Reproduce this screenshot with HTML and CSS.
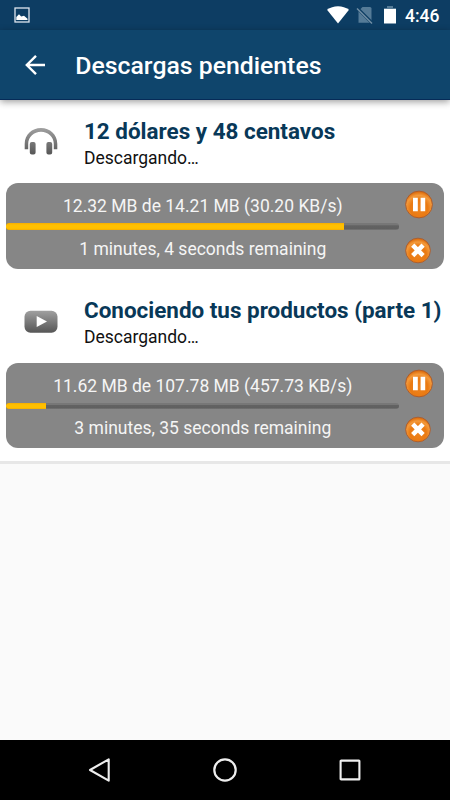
FILE: index.html
```html
<!DOCTYPE html>
<html lang="es">
<head>
<meta charset="utf-8">
<title>Descargas pendientes</title>
<link rel="stylesheet" href="styles.css">
</head>
<body>
<svg class="defs" width="0" height="0" aria-hidden="true">
  <defs>
    <linearGradient id="grey" x1="0" y1="0" x2="0" y2="1"><stop offset="0" stop-color="#a0a0a0"/><stop offset="1" stop-color="#565656"/></linearGradient>
    <radialGradient id="orange" cx=".5" cy=".65" r=".6"><stop offset="0" stop-color="#ee8420"/><stop offset=".55" stop-color="#ea7a12"/><stop offset=".82" stop-color="#f39a3c"/><stop offset="1" stop-color="#e27412"/></radialGradient>
    <symbol id="pause" viewBox="0 0 28 28"><circle cx="14" cy="14" r="13.4" fill="url(#orange)" stroke="#a6582c" stroke-width=".9"/><path d="M8 7.2h4.8v13.6H8zM15.6 7.2h4.6v13.6h-4.6z" fill="#fff"/></symbol>
    <symbol id="cancel" viewBox="0 0 28 28"><circle cx="14" cy="14" r="13.3" fill="url(#orange)" stroke="#a6582c" stroke-width=".9"/><path d="M8.3 8.3l11.2 11.2M19.5 8.3L8.3 19.5" stroke="#fff" stroke-width="4.9"/></symbol>
  </defs>
</svg>
<header class="statusbar">
  <svg class="picture" width="16" height="16" viewBox="0 0 16 16"><rect x="1" y="1" width="14" height="14" fill="none" stroke="#dfe5ee" stroke-width="1.3"/><path d="M2.3 12.9V10L5 7.2 7.2 9.5 10 8.7l3.5 3v1.2z" fill="#fff"/></svg>
  <svg class="wifi" width="24" height="20" viewBox="0 0 24 20"><path d="M1 4.8C7-.1 17-.1 23 4.8L12 18.4z" fill="#fff"/></svg>
  <svg class="sim" width="18" height="20" viewBox="0 0 18 20"><path d="M6.5 2H14q1.5 0 1.5 1.5v14.2H2.5V6z" fill="#557b97"/><path d="M1 2.8l15.5 15.5" stroke="#0d3e64" stroke-width="3.2"/><path d="M1 3.4l15 15.2" stroke="#7390a6" stroke-width="1.4"/></svg>
  <svg class="battery" width="14" height="20" viewBox="0 0 14 20"><path d="M4 1h6v2h3v3H1V3h3z" fill="#557b97"/><path d="M1 4h12v14.5H1z" fill="#fff"/></svg>
  <time class="clock">4:46</time>
</header>
<nav class="appbar">
  <svg class="back" width="21" height="22" viewBox="0 0 21 22"><path d="M20 11H2M11 1.8L1.8 11l9.2 9.2" fill="none" stroke="#fff" stroke-width="2.4"/></svg>
  <h1>Descargas pendientes</h1>
</nav>
<main>
  <section class="downloads">
    <article class="item">
      <div class="heading">
        <svg class="kind" width="34" height="30" viewBox="0 0 34 30"><path d="M.7 22.2V17C.7 7.5 8 1 17 1s16.3 6.5 16.3 16v5.2h-3.5V17C29.8 9.8 24 4.7 17 4.7S4.2 9.8 4.2 17v5.2zM5.8 17a2 2 0 0 1 2-2h1.8a2 2 0 0 1 2 2v8.5a2 2 0 0 1-2 2H7.8a2 2 0 0 1-2-2zM22.4 17a2 2 0 0 1 2-2h1.8a2 2 0 0 1 2 2v8.5a2 2 0 0 1-2 2h-1.8a2 2 0 0 1-2-2z" fill="url(#grey)"/></svg>
        <div class="titles"><h2>12 dólares y 48 centavos</h2><p>Descargando…</p></div>
      </div>
      <div class="panel">
        <div class="progress">
          <p>12.32 MB de 14.21 MB (30.20 KB/s)</p>
          <div class="track"><div class="fill" style="width:86%"></div></div>
          <p>1 minutes, 4 seconds remaining</p>
        </div>
        <div class="actions"><svg width="28" height="29"><use href="#pause"/></svg><svg width="26" height="27"><use href="#cancel"/></svg></div>
      </div>
    </article>
    <article class="item">
      <div class="heading">
        <svg class="kind" width="34" height="30" viewBox="0 0 34 30"><rect x=".5" y="3.7" width="33" height="22" rx="6" fill="url(#grey)"/><path d="M12.7 8.9L23 14.5l-10.3 5.6z" fill="#fff"/></svg>
        <div class="titles"><h2>Conociendo tus productos (parte 1)</h2><p>Descargando…</p></div>
      </div>
      <div class="panel">
        <div class="progress">
          <p>11.62 MB de 107.78 MB (457.73 KB/s)</p>
          <div class="track"><div class="fill" style="width:10.1%"></div></div>
          <p>3 minutes, 35 seconds remaining</p>
        </div>
        <div class="actions"><svg width="28" height="29"><use href="#pause"/></svg><svg width="26" height="27"><use href="#cancel"/></svg></div>
      </div>
    </article>
  </section>
</main>
<footer class="navbar">
  <svg width="24" height="26" viewBox="0 0 24 26"><path d="M20.7 2.3v21.4L2 13z" fill="none" stroke="#eee" stroke-width="2.1" stroke-linejoin="round"/></svg>
  <svg width="26" height="26" viewBox="0 0 26 26"><circle cx="13" cy="13" r="10.7" fill="none" stroke="#eee" stroke-width="2.2"/></svg>
  <svg width="24" height="24" viewBox="0 0 24 24"><rect x="2.6" y="2.6" width="18.8" height="18.8" rx=".5" fill="none" stroke="#eee" stroke-width="2.1"/></svg>
</footer>
</body>
</html>
```
FILE: styles.css
```css
* { box-sizing: border-box; margin: 0; padding: 0; }
body { width: 450px; height: 800px; display: flex; flex-direction: column; overflow: hidden; background: #fafafa; font-family: Roboto, sans-serif; font-size: 17.5px; }
svg { display: block; flex: none; }
.defs { position: absolute; }
.statusbar { height: 30px; flex: none; display: flex; align-items: center; background: #0d3d63; padding: 0 10px 0 14px; color: #fff; }
.picture { margin-right: auto; }
.wifi { margin-right: 6px; }
.sim { margin-right: 9px; }
.battery { margin-right: 8px; }
.clock { width: 35px; padding-top: 1px; font-size: 17.5px; font-weight: 500; line-height: 30px; white-space: nowrap; }
.appbar { height: 70px; flex: none; display: flex; align-items: center; gap: 29.3px; padding-left: 25px; background: #0f456c; color: #fff; border-bottom: 1px solid #062b58; box-shadow: 0 2px 7px rgba(0, 0, 0, .38); z-index: 1; }
h1 { font-size: 24.8px; font-weight: 500; line-height: 30px; padding-top: 2px; white-space: nowrap; }
main { flex: 1; }
.downloads { background: #fff; border-bottom: 3.5px solid #e7e7e7; height: 363.5px; }
.item { height: 179.5px; padding: 16px 6.3px 0; }
.heading { height: 67.3px; display: flex; padding-left: 18.2px; }
.kind { margin: 11px 25.5px 0 0; }
.titles { white-space: nowrap; }
h2 { font-size: 22.45px; font-weight: 700; line-height: 30px; color: #083858; }
.titles p { line-height: 24px; color: #111; }
.item + .item .titles { margin-top: -.6px; }
.item + .item h2 { padding-top: 1px; line-height: 29px; }
.panel { height: 85.7px; display: flex; border-radius: 12px; background: #868686; color: #f5f5f5; }
.progress { width: 393px; padding-top: 5px; text-align: center; }
.progress p { height: 35px; line-height: 36.5px; white-space: nowrap; }
.progress .track + p { line-height: 39px; }
.track { height: 6.4px; border-radius: 3.2px; overflow: hidden; background: linear-gradient(#777 0, #777 25%, #626262 40%, #606060 80%, #777); }
.fill { height: 100%; background: linear-gradient(#f6ae00, #ffc000 30%, #ffc000 75%, #f5ad00); }
.actions { padding: 6.5px 0 0 6px; display: flex; flex-direction: column; gap: 18px; }
.navbar { height: 60px; flex: none; display: flex; align-items: center; justify-content: space-between; padding: 0 88px 0 88px; background: #000; }
```
